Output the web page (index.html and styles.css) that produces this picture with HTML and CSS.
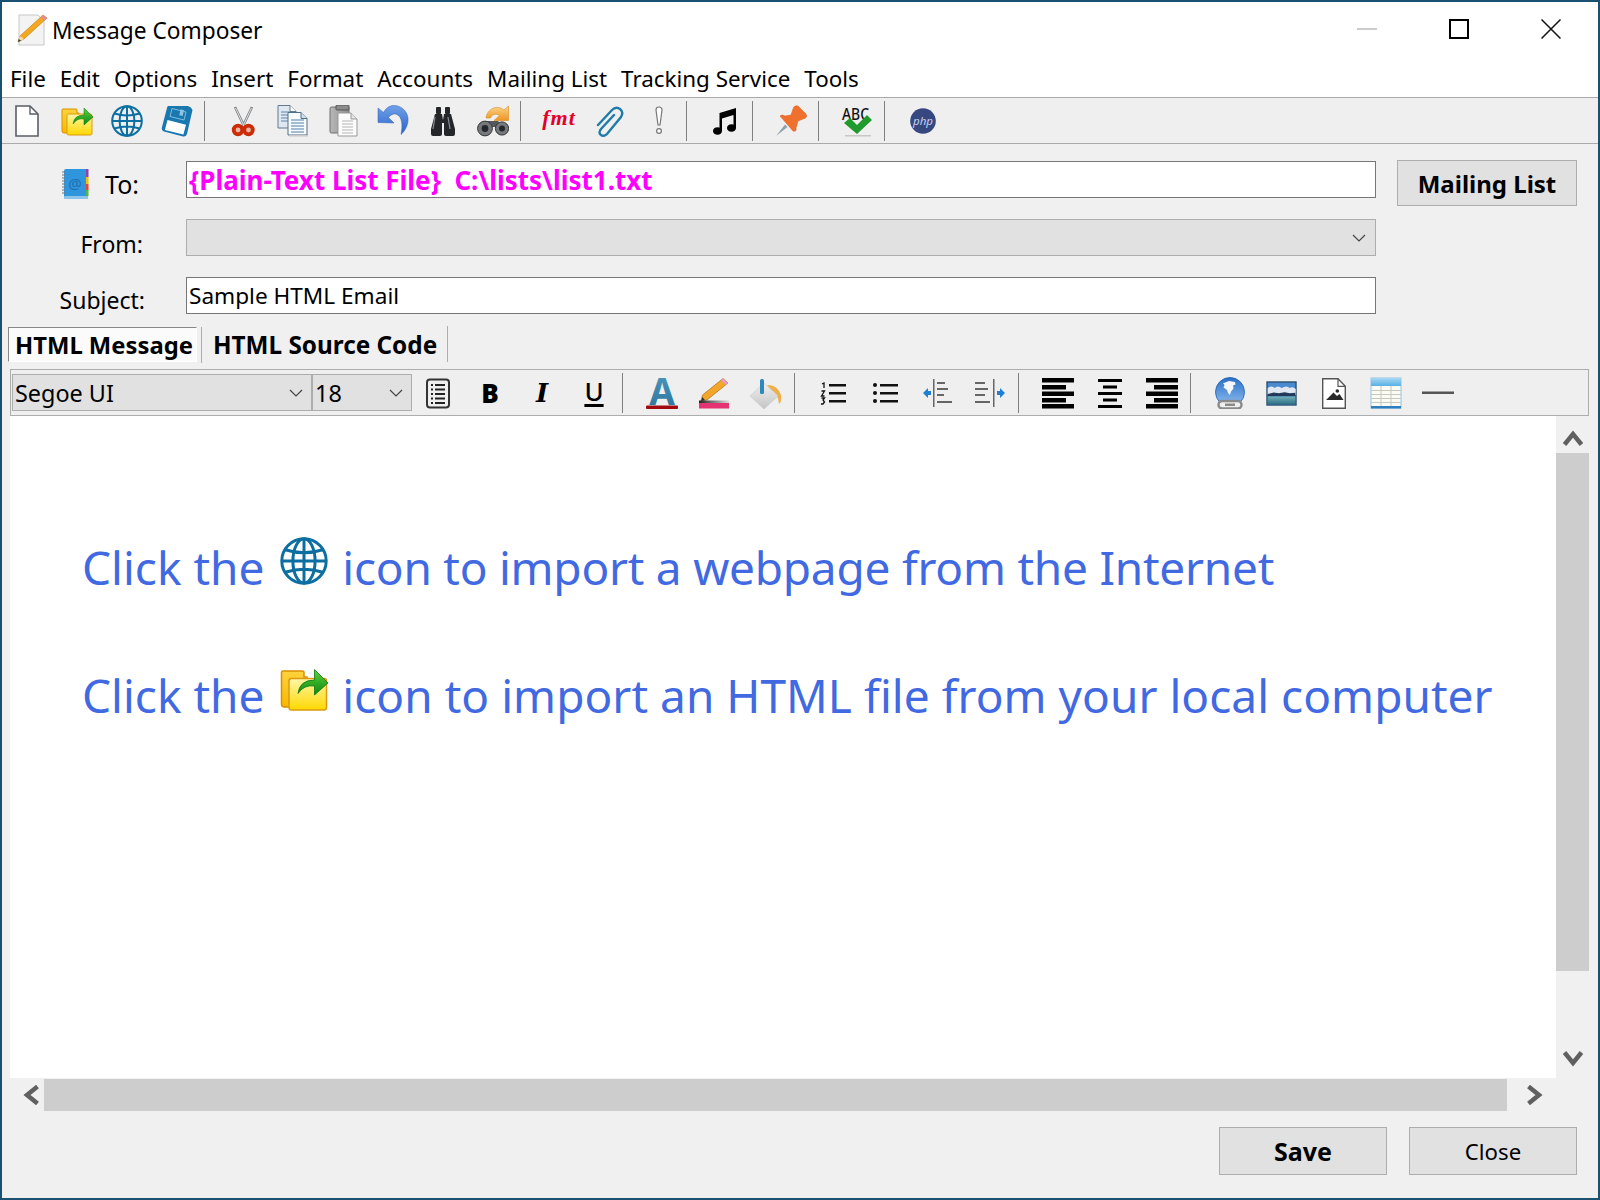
FILE: index.html
```html
<!DOCTYPE html>
<html lang="en">
<head>
<meta charset="utf-8">
<title>Message Composer</title>
<link rel="stylesheet" href="styles.css">
</head>
<body>
<svg class="sprite" xmlns="http://www.w3.org/2000/svg">
  <defs>
    <linearGradient id="gFolder" x1="0" y1="0" x2="0" y2="1"><stop offset="0" stop-color="#fff6a8"/><stop offset="1" stop-color="#ffd800"/></linearGradient>
    <linearGradient id="gBack" x1="0" y1="0" x2="0" y2="1"><stop offset="0" stop-color="#ffd23c"/><stop offset="1" stop-color="#f8b800"/></linearGradient>
    <linearGradient id="gArrow" x1="0" y1="0" x2="0" y2="1"><stop offset="0" stop-color="#5fd03a"/><stop offset="1" stop-color="#0a8a12"/></linearGradient>
    <linearGradient id="gUndo" x1="0" y1="0" x2="0" y2="1"><stop offset="0" stop-color="#6fa0e8"/><stop offset="1" stop-color="#2a64c8"/></linearGradient>
    <linearGradient id="gOrange" x1="0" y1="0" x2="0" y2="1"><stop offset="0" stop-color="#fbd58a"/><stop offset="1" stop-color="#ef9420"/></linearGradient>
    <linearGradient id="gA" x1="0" y1="0" x2="0" y2="1"><stop offset="0" stop-color="#4f9fc4"/><stop offset="1" stop-color="#2a6f98"/></linearGradient>
    <linearGradient id="gSea" x1="0" y1="0" x2="0" y2="1"><stop offset="0" stop-color="#6fb0b8"/><stop offset="1" stop-color="#2f6f88"/></linearGradient>
    <linearGradient id="gEarth" x1="0" y1="0" x2="0" y2="1"><stop offset="0" stop-color="#2a6fc8"/><stop offset="1" stop-color="#8fc0f0"/></linearGradient>
    <linearGradient id="gHead" x1="0" y1="0" x2="0" y2="1"><stop offset="0" stop-color="#a8d8f4"/><stop offset="1" stop-color="#58b0e4"/></linearGradient>
    <linearGradient id="gLine" x1="0" y1="0" x2="1" y2="0"><stop offset="0" stop-color="#222"/><stop offset="1" stop-color="#ddd"/></linearGradient>
    <linearGradient id="gBoard" x1="0" y1="0" x2="1" y2="0"><stop offset="0" stop-color="#b8b8b8"/><stop offset="1" stop-color="#8f8f8f"/></linearGradient>
    <linearGradient id="gDiamond" x1="0" y1="0" x2="0" y2="1"><stop offset="0" stop-color="#f0f0f0"/><stop offset="1" stop-color="#c4c4c4"/></linearGradient>
  </defs>
  <symbol id="i-new" viewBox="0 0 32 32">
    <path d="M5 1h14l8 8v22H5z" fill="#fff" stroke="#5a5f66" stroke-width="1.6"/>
    <path d="M19 1v8h8" fill="none" stroke="#5a5f66" stroke-width="1.4"/>
  </symbol>
  <symbol id="i-open" viewBox="0 0 32 32">
    <path d="M1 5q0-1 1-1h13q1 0 1 1v3h2v20H3q-2 0-2-2z" fill="url(#gBack)" stroke="#d89000"/>
    <rect x="6" y="9" width="25" height="21" rx="1.6" fill="url(#gFolder)" stroke="#dc9a10"/>
    <path d="M12 19q1-9 11-9V3l9 9-9 8v-6q-7-1-11 5z" fill="url(#gArrow)" stroke="#067010" stroke-width=".5"/>
  </symbol>
  <symbol id="i-globe" viewBox="0 0 32 32">
    <g fill="none" stroke="#0d6fa1" stroke-width="2">
      <circle cx="16" cy="16" r="14.8"/>
      <ellipse cx="16" cy="16" rx="7.4" ry="14.8"/>
      <path d="M16 1v30M1 16h30M3.500 8.500q12.500 4 25 0M3.500 23.500q12.500-4 25 0"/>
    </g>
  </symbol>
  <symbol id="i-disk" viewBox="0 0 32 32">
    <path d="M7 1h20q3.500 1 4.500 4L26 29q-1 3-4 2.500L3 26.500Q0 25 1 22L6 3q.2-1.500 1-2z" fill="#1a78b0"/>
    <path d="M11 3.500l14 3.500-2 8-14-3.500z" fill="#1a78b0" stroke="#7fbcdc"/>
    <rect x="19" y="4.500" width="3.500" height="6" fill="#8fc4e0" transform="rotate(14 20 7)"/>
    <path d="M6.500 15l18.500 4.700-2.600 9.800L3.900 25z" fill="#fff"/>
  </symbol>
  <symbol id="i-cut" viewBox="0 0 32 32">
    <path d="M8 2l9.500 20M25 2l-9.500 20" stroke="#85898d" stroke-width="2.600" fill="none"/>
    <path d="M8.500 3l8.500 18M24.500 3l-8.500 18" stroke="#f2f3f4" stroke-width=".8" fill="none"/>
    <circle cx="11" cy="25" r="4.300" fill="#e8b8a0" stroke="#cc2c08" stroke-width="3.800"/>
    <circle cx="21.500" cy="25" r="4.300" fill="#e8b8a0" stroke="#cc2c08" stroke-width="3.800"/>
  </symbol>
  <symbol id="i-copy" viewBox="0 0 32 32">
    <path d="M1 .5h12l6 6V23H1z" fill="#dfe8f0" stroke="#62798e"/>
    <path d="M4 7h10M4 10h10M4 13h10M4 16h10" stroke="#5f86a8"/>
    <path d="M13 .5v6h6" fill="#fff" stroke="#62798e"/>
    <path d="M11 7.500h13l6 6V30H11z" fill="#f8fbfe" stroke="#4f6f8a"/>
    <path d="M14 15h13M14 18h13M14 21h13M14 24h13M14 27h13" stroke="#4f7ea8"/>
    <path d="M24 7.500v6h6" fill="#cfdfee" stroke="#4f6f8a"/>
    <rect x="12" y="30" width="19" height="1.500" fill="#c8c8c8"/>
  </symbol>
  <symbol id="i-paste" viewBox="0 0 32 32">
    <rect x="3" y="2" width="19" height="26" rx="1.500" fill="url(#gBoard)" stroke="#6d6d6d"/>
    <rect x="9" y="0" width="13" height="5" rx="1" fill="#8c8c8c" stroke="#555"/>
    <path d="M11 8h13l6 6v17H11z" fill="#fcfcfc" stroke="#999"/>
    <path d="M15 16h11M15 19h11M15 22h11M15 25h11M15 28h11" stroke="#b4b4b4"/>
    <path d="M24 8v6h6" fill="#e4e4e4" stroke="#999"/>
  </symbol>
  <symbol id="i-undo" viewBox="0 0 32 32">
    <path d="M1 3v14.500L17 18l-5.500-5.500C14 9.500 17 8 20 9.500c5 2.500 6 10.500 4 20 4-3.500 7.500-9.500 7-16.500C30 5 23 0 16 .5 12 1 9 3 6.500 7.500z" fill="url(#gUndo)" stroke="#2a5fb8" stroke-width=".5"/>
  </symbol>
  <symbol id="i-find" viewBox="0 0 32 32">
    <g fill="#24262a">
      <rect x="9" y="2" width="5" height="7" rx="1"/>
      <rect x="18" y="2" width="5" height="7" rx="1"/>
      <path d="M8 9h7l1 6h0l1-6h7l4 15v5q0 2-2 2h-7q-2 0-2-2V18h-2v11q0 2-2 2H6q-2 0-2-2v-5z"/>
    </g>
    <path d="M8 12l-2 12M21 12l2 12" stroke="#8a8f94" stroke-width="1.200"/>
  </symbol>
  <symbol id="i-replace" viewBox="0 0 32 32">
    <path d="M9 13C10 4 20-1 27 5l4.500-4v14.500H17l5.500-5C19 8 15 9 13.500 13z" fill="url(#gOrange)" stroke="#d88a20" stroke-width=".6"/>
    <path d="M11 16h10l3 3 3 3H5z" fill="#55585c"/>
    <circle cx="8" cy="23.500" r="7.400" fill="#75797d" stroke="#333"/>
    <circle cx="8" cy="23.500" r="3.400" fill="#25272a"/>
    <circle cx="25" cy="23.500" r="6.600" fill="#75797d" stroke="#333"/>
    <circle cx="25" cy="23.500" r="3" fill="#25272a"/>
  </symbol>
  <symbol id="i-clip" viewBox="0 0 32 32">
    <path d="M21 9L8 23q-3 4 0 6 3 2 6-1L28 11q3-5-1-8-4-3-8 1L5 19" fill="none" stroke="#1f7ba8" stroke-width="2.400" stroke-linecap="round" transform="translate(0 1)"/>
  </symbol>
  <symbol id="i-alert" viewBox="0 0 32 32">
    <path d="M13 5q0-3 3-3t3 3l-2 15h-2z" fill="#fff" stroke="#777" stroke-width="1.200"/>
    <circle cx="16" cy="26" r="2.400" fill="#fff" stroke="#777" stroke-width="1.200"/>
  </symbol>
  <symbol id="i-music" viewBox="0 0 32 32">
    <path d="M10.500 8L27 3v20h-2.500V10l-11.500 3.500V26h-2.500z" fill="#000"/>
    <ellipse cx="8.500" cy="26" rx="4.500" ry="3.800" fill="#000"/>
    <ellipse cx="22.500" cy="23" rx="4.500" ry="3.800" fill="#000"/>
  </symbol>
  <symbol id="i-pin" viewBox="0 0 32 32">
    <path d="M1 31l9-11.500 2.500 2.500z" fill="#8fa3aa"/>
    <path d="M5 11q2-2 5 0l6-1 2-6q1-4 5-3l8 8q2 4-3 5l-5 2-2 7q1 4-3 3z" fill="#f0702e" stroke="#dc5c1c" stroke-width=".5" stroke-linejoin="round"/>
  </symbol>
  <symbol id="i-title" viewBox="0 0 32 32">
    <path d="M3 1h19l6 6v24H3z" fill="#f3f3f3" stroke="#c8c8c8"/>
    <path d="M27 1l4 3L8 25l-6 3 2-6z" fill="#f4a820" stroke="#b87a10" stroke-width=".6"/>
    <path d="M27 1l4 3-2.500 2.400-4-3z" fill="#e88a90"/>
    <path d="M4 22l-2 6 6-3z" fill="#f5dcb0"/>
    <path d="M2.800 25L2 28l3-1.300z" fill="#333"/>
  </symbol>
  <symbol id="i-notes" viewBox="0 0 32 32">
    <rect x="5" y="2.500" width="22" height="28" rx="3" fill="none" stroke="#333" stroke-width="2"/>
    <path d="M9 8h2M13 8h10M9 12.500h2M13 12.500h10M9 17h2M13 17h10M9 21.500h2M13 21.500h10M9 26h2M13 26h10" stroke="#222" stroke-width="2"/>
  </symbol>
  <symbol id="i-hilite" viewBox="0 0 32 32">
    <path d="M25 1.500l5 4.500L9 23l-6 1 1.500-6z" fill="#f4a62a" stroke="#a87018" stroke-width=".7"/>
    <path d="M25 1.500l5 4.500-2 2-5-4.500z" fill="#e89ac8"/>
    <path d="M4.500 20L3 24l4-.7z" fill="#333"/>
    <rect x="1" y="23.500" width="30" height="2.500" fill="url(#gLine)"/>
    <rect x="1" y="26" width="30" height="5.500" fill="#e43272"/>
  </symbol>
  <symbol id="i-bucket" viewBox="0 0 32 32">
    <path d="M17 8q10-1 14 10 1 7-2 9-1-11-8-14z" fill="#eeb14a"/>
    <path d="M14 6L0 19l14 13 14-13z" fill="url(#gDiamond)" stroke="#c8c8c8" stroke-width=".6"/>
    <rect x="10" y="2" width="4" height="15" rx="1.500" fill="#2e88bc"/>
  </symbol>
  <symbol id="i-ol" viewBox="0 0 32 32">
    <path d="M4 7l2-1v5M3.500 14h3l-3 5h3M3.500 21h3l-1.500 2 1.500 2-1.500 2h-2" fill="none" stroke="#111" stroke-width="1.300"/>
    <rect x="11" y="7" width="17" height="2.500" fill="#111"/>
    <rect x="11" y="15" width="17" height="2.500" fill="#111"/>
    <rect x="11" y="23" width="17" height="2.500" fill="#111"/>
  </symbol>
  <symbol id="i-ul" viewBox="0 0 32 32">
    <g fill="#111">
      <circle cx="5" cy="8" r="2"/><circle cx="5" cy="16" r="2"/><circle cx="5" cy="24" r="2"/>
      <rect x="10" y="7" width="18" height="2.500"/><rect x="10" y="15" width="18" height="2.500"/><rect x="10" y="23" width="18" height="2.500"/>
    </g>
  </symbol>
  <symbol id="i-outdent" viewBox="0 0 32 32">
    <path d="M1 16l5-5v3h3v4H6v3z" fill="#1f7fd0"/>
    <rect x="11" y="2" width="1.500" height="28" fill="#666"/>
    <g fill="#666"><rect x="15" y="5" width="8" height="2"/><rect x="15" y="11" width="11" height="2"/><rect x="15" y="17" width="7" height="2"/><rect x="15" y="24" width="15" height="2"/></g>
  </symbol>
  <symbol id="i-indent" viewBox="0 0 32 32">
    <g fill="#666"><rect x="1" y="5" width="10" height="2"/><rect x="1" y="11" width="13" height="2"/><rect x="1" y="17" width="10" height="2"/><rect x="1" y="24" width="15" height="2"/></g>
    <rect x="19" y="2" width="1.500" height="28" fill="#666"/>
    <path d="M31 16l-5-5v3h-3v4h3v3z" fill="#1f7fd0"/>
  </symbol>
  <symbol id="i-al" viewBox="0 0 32 32">
    <g fill="#000"><rect y="1" width="32" height="4.500"/><rect y="8" width="24" height="4.500"/><rect y="14.500" width="32" height="4.500"/><rect y="21" width="24" height="4.500"/><rect y="27" width="32" height="4.500"/></g>
  </symbol>
  <symbol id="i-ac" viewBox="0 0 32 32">
    <g fill="#000"><rect x="4" y="2" width="24" height="3"/><rect x="9" y="8.500" width="14" height="3"/><rect x="4" y="15" width="24" height="3"/><rect x="9" y="21.500" width="14" height="3"/><rect x="4" y="28" width="24" height="3"/></g>
  </symbol>
  <symbol id="i-ar" viewBox="0 0 32 32">
    <g fill="#000"><rect y="1" width="32" height="4.500"/><rect x="8" y="8" width="24" height="4.500"/><rect y="14.500" width="32" height="4.500"/><rect x="8" y="21" width="24" height="4.500"/><rect y="27" width="32" height="4.500"/></g>
  </symbol>
  <symbol id="i-link" viewBox="0 0 32 32">
    <circle cx="16" cy="15" r="14.500" fill="url(#gEarth)" stroke="#1c5fa8" stroke-width=".8"/>
    <path d="M10 6l5-2 6 1 .5 2.500-2.500 1 .5 3-2.500 3-1 3.500-2-2-1-3-3.500-2.500 1-2.500-1.500-2z" fill="#f4f7fb"/>
    <rect x="4.500" y="24" width="23" height="7.500" rx="3.700" fill="#efefef" stroke="#8a8a8a" stroke-width="2.400"/>
    <rect x="11" y="26.500" width="10" height="2.500" fill="#8a8a8a"/>
  </symbol>
  <symbol id="i-image" viewBox="0 0 32 32">
    <rect x="1" y="5" width="29" height="23" fill="#4a8ad0" stroke="#2a5070" stroke-width="1.400"/>
    <path d="M1.700 11q4-3 7 0 3-3 7 0 5-3 8 0 3-2 6 1v6H1.700z" fill="#dfe8f2"/>
    <path d="M1.700 17l6-1.500 5 .8 6-1 5 1 5.600-.5v3.500H1.700z" fill="#23385a"/>
    <rect x="1.700" y="19.500" width="27.600" height="7.800" fill="url(#gSea)"/>
  </symbol>
  <symbol id="i-imgfile" viewBox="0 0 32 32">
    <path d="M4.700 1.700H20l7.300 7.600v22H4.700z" fill="#fff" stroke="#555" stroke-width="1.400"/>
    <path d="M20 1.700v7.600h7.300" fill="none" stroke="#555" stroke-width="1.200"/>
    <path d="M8 23l7.500-7.500 3.500 3.500 2.500-2 4 6z" fill="#2a2a2a"/>
    <circle cx="19.300" cy="14" r="1.800" fill="#2a2a2a"/>
  </symbol>
  <symbol id="i-table" viewBox="0 0 32 32">
    <rect x="1" y="1" width="30" height="30" fill="#fbfbf6" stroke="#8fc4e6"/>
    <rect x="1" y="1" width="30" height="8" fill="url(#gHead)"/>
    <rect x="1" y="29" width="30" height="2.500" fill="#2f7fc0"/>
    <path d="M1 13.500h30M1 17.500h30M1 21.500h30M1 25.500h30M11 9v20M21 9v20" stroke="#c8c8c0" stroke-width="1"/>
  </symbol>
  <symbol id="i-rule" viewBox="0 0 32 32">
    <rect y="14.500" width="32" height="2.500" fill="#555"/>
  </symbol>
</svg>

<div class="window">
  <header class="titlebar">
    <svg class="icon"><use href="#i-title"/></svg>
    <span class="title">Message Composer</span>
    <div class="winbtns">
      <svg class="winbtn" viewBox="0 0 20 20"><path d="M0 10h20" stroke="#ccc" stroke-width="2"/></svg>
      <svg class="winbtn" viewBox="0 0 20 20"><rect x="1" y="1" width="18" height="18" fill="none" stroke="#000" stroke-width="2"/></svg>
      <svg class="winbtn" viewBox="0 0 20 20"><path d="M.5.500l19 19M19.500.500l-19 19" stroke="#111" stroke-width="1.500"/></svg>
    </div>
  </header>
  <nav class="menubar">
    <span>File</span><span>Edit</span><span>Options</span><span>Insert</span><span>Format</span><span>Accounts</span><span>Mailing List</span><span>Tracking Service</span><span>Tools</span>
  </nav>
  <div class="toolbar">
    <span class="slot"><svg class="icon"><use href="#i-new"/></svg></span>
    <span class="slot"><svg class="icon"><use href="#i-open"/></svg></span>
    <span class="slot"><svg class="icon"><use href="#i-globe"/></svg></span>
    <span class="slot"><svg class="icon"><use href="#i-disk"/></svg></span>
    <span class="sep"></span>
    <span class="slot"><svg class="icon"><use href="#i-cut"/></svg></span>
    <span class="slot"><svg class="icon"><use href="#i-copy"/></svg></span>
    <span class="slot"><svg class="icon"><use href="#i-paste"/></svg></span>
    <span class="slot"><svg class="icon"><use href="#i-undo"/></svg></span>
    <span class="slot"><svg class="icon"><use href="#i-find"/></svg></span>
    <span class="slot"><svg class="icon"><use href="#i-replace"/></svg></span>
    <span class="sep"></span>
    <span class="slot fmt">fmt</span>
    <span class="slot"><svg class="icon"><use href="#i-clip"/></svg></span>
    <span class="slot"><svg class="icon"><use href="#i-alert"/></svg></span>
    <span class="sep"></span>
    <span class="slot"><svg class="icon"><use href="#i-music"/></svg></span>
    <span class="sep"></span>
    <span class="slot"><svg class="icon"><use href="#i-pin"/></svg></span>
    <span class="sep"></span>
    <span class="slot">
      <svg class="icon" viewBox="0 0 32 32">
        <text x="1" y="15" textLength="27" lengthAdjust="spacingAndGlyphs" class="svg-abc">ABC</text>
        <path d="M3 18l6-5 7 7 10-10 5 5-15 14z" fill="#1f9a2c"/>
        <rect x="4" y="30" width="26" height="1.500" fill="#c8c8c8"/>
      </svg>
    </span>
    <span class="sep"></span>
    <span class="slot">
      <svg class="icon" viewBox="0 0 32 32">
        <circle cx="16" cy="16" r="12.800" fill="#37477f"/>
        <text x="16" y="20" text-anchor="middle" class="svg-php">php</text>
      </svg>
    </span>
  </div>

  <section class="form">
    <label class="lbl lbl-to">
      <svg class="icon book" viewBox="0 0 32 32">
        <rect x="4" y="1" width="24" height="30" rx="2" fill="#2f95dc"/>
        <rect x="4" y="28" width="24" height="3" rx="1" fill="#8cc4ea"/>
        <rect x="26" y="1" width="2.500" height="8" fill="#9040b0"/>
        <rect x="26" y="9" width="2.500" height="7" fill="#f5c000"/>
        <rect x="26" y="16" width="2.500" height="6" fill="#e8452c"/>
        <rect x="26" y="22" width="2.500" height="6" fill="#4fb848"/>
        <path d="M2 4h3M2 7h3M2 10h3M2 13h3M2 16h3M2 19h3M2 22h3M2 25h3" stroke="#777" stroke-width="1"/>
        <text x="15" y="21" text-anchor="middle" class="svg-at">@</text>
      </svg>To:</label>
    <div class="field to-field">{Plain-Text List File}  C:\lists\list1.txt</div>
    <button class="btn btn-list">Mailing List</button>
    <label class="lbl lbl-from">From:</label>
    <div class="field field-off"><svg class="chev" viewBox="0 0 14 8"><path d="M1 1l6 6 6-6" fill="none" stroke="#444" stroke-width="1.200"/></svg></div>
    <span></span>
    <label class="lbl lbl-subject">Subject:</label>
    <div class="field">Sample HTML Email</div>
  </section>

  <div class="tabs">
    <span class="tab tab-on">HTML Message</span>
    <span class="tab tab-src">HTML Source Code</span>
  </div>

  <div class="fmtbar">
    <div class="combo combo-font">Segoe UI<svg class="chev" viewBox="0 0 14 8"><path d="M1 1l6 6 6-6" fill="none" stroke="#444" stroke-width="1.200"/></svg></div>
    <div class="combo combo-size">18<svg class="chev" viewBox="0 0 14 8"><path d="M1 1l6 6 6-6" fill="none" stroke="#444" stroke-width="1.200"/></svg></div>
    <span class="fslot"><svg class="icon"><use href="#i-notes"/></svg></span>
    <span class="fslot fx fx-b">B</span>
    <span class="fslot fx fx-i">I</span>
    <span class="fslot fx fx-u">U</span>
    <span class="sep"></span>
    <span class="fslot">
      <svg class="icon" viewBox="0 0 32 32">
        <text x="16" y="27.500" text-anchor="middle" class="svg-a">A</text>
        <rect x="0" y="28.500" width="32" height="3.500" rx="1" fill="#a00a10"/>
      </svg>
    </span>
    <span class="fslot"><svg class="icon"><use href="#i-hilite"/></svg></span>
    <span class="fslot"><svg class="icon"><use href="#i-bucket"/></svg></span>
    <span class="sep"></span>
    <span class="fslot"><svg class="icon"><use href="#i-ol"/></svg></span>
    <span class="fslot"><svg class="icon"><use href="#i-ul"/></svg></span>
    <span class="fslot"><svg class="icon"><use href="#i-outdent"/></svg></span>
    <span class="fslot"><svg class="icon"><use href="#i-indent"/></svg></span>
    <span class="sep"></span>
    <span class="fslot"><svg class="icon"><use href="#i-al"/></svg></span>
    <span class="fslot"><svg class="icon"><use href="#i-ac"/></svg></span>
    <span class="fslot"><svg class="icon"><use href="#i-ar"/></svg></span>
    <span class="sep"></span>
    <span class="fslot"><svg class="icon"><use href="#i-link"/></svg></span>
    <span class="fslot"><svg class="icon"><use href="#i-image"/></svg></span>
    <span class="fslot"><svg class="icon"><use href="#i-imgfile"/></svg></span>
    <span class="fslot"><svg class="icon"><use href="#i-table"/></svg></span>
    <span class="fslot"><svg class="icon"><use href="#i-rule"/></svg></span>
  </div>

  <div class="workarea">
    <main class="editor">
      <p>Click the <svg class="inline"><use href="#i-globe"/></svg> <span class="tail-a">icon to import a webpage from the Internet</span></p>
      <p>Click the <svg class="inline"><use href="#i-open"/></svg> <span class="tail-b">icon to import an HTML file from your local computer</span></p>
    </main>
    <div class="vscroll">
      <svg class="arrow-v" viewBox="0 0 20 16"><path d="M1.500 14.500L10 4l8.500 10.500" fill="none" stroke="#606060" stroke-width="4.500"/></svg>
      <div class="vthumb"></div>
      <svg class="arrow-v" viewBox="0 0 20 16"><path d="M1.500 1.500L10 12l8.500-10.500" fill="none" stroke="#606060" stroke-width="4.500"/></svg>
    </div>
  </div>
  <div class="hscroll">
    <svg class="arrow-h" viewBox="0 0 16 20"><path d="M14.500 1.500L4 10l10.500 8.500" fill="none" stroke="#606060" stroke-width="4.500"/></svg>
    <div class="hthumb"></div>
    <svg class="arrow-h" viewBox="0 0 16 20"><path d="M1.500 1.500L12 10 1.500 18.500" fill="none" stroke="#606060" stroke-width="4.500"/></svg>
  </div>
  <footer class="footer">
    <button class="btn btn-foot btn-save">Save</button>
    <button class="btn btn-foot btn-close">Close</button>
  </footer>
</div>
</body>
</html>
```

FILE: styles.css
```css
* { box-sizing: border-box; }
html, body { margin: 0; padding: 0; }
body { font-family: "Noto Sans", sans-serif; font-size: 22.6px; color: #000; background: #f0f0f0; }
.sprite { position: absolute; width: 0; height: 0; overflow: hidden; }
.svg-abc { font: 500 17px "Noto Sans", sans-serif; fill: #111; }
.svg-php { font: italic 11.5px "Noto Sans", sans-serif; fill: #c6d0f0; }
.svg-at { font: 15px "Noto Sans", sans-serif; fill: #1d70b0; }
.svg-a { font: bold 37px "Noto Sans", sans-serif; fill: url(#gA); }

.window { width: 1600px; height: 1200px; border: 2px solid #1b5170; background: #f0f0f0; display: flex; flex-direction: column; overflow: hidden; }
.icon { width: 32px; height: 32px; display: block; flex: none; }

.titlebar { height: 50px; background: #fff; display: flex; align-items: center; padding: 6px 0 0 14px; }
.title { margin-left: 4px; font-size: 22.7px; }
.winbtns { margin-left: auto; display: flex; gap: 72px; padding-right: 37px; margin-top: -2px; }
.winbtn { width: 20px; height: 20px; display: block; }

.menubar { height: 45px; background: #fff; display: flex; align-items: center; gap: 14px; padding: 8px 0 0 8px; font-size: 22.4px; }

.toolbar { height: 47px; background: #efefef; border-top: 1px solid #aaa; border-bottom: 1px solid #aaa; display: flex; align-items: center; }
.slot { width: 50px; display: flex; justify-content: center; align-items: center; flex: none; }
.sep { width: 1px; height: 40px; background: #808080; margin: 0 13px 0 2px; flex: none; }
.fmt { font: italic bold 22px "Liberation Serif", serif; color: #e3002a; letter-spacing: 1px; padding-bottom: 5px; }

.form { display: grid; grid-template-columns: 184px 1190px 201px; grid-auto-rows: 37px; row-gap: 21px; padding-top: 17px; }
.lbl { display: flex; align-items: center; justify-content: flex-end; }
.lbl-to { padding-right: 47px; padding-top: 8px; font-size: 25px; }
.lbl-from { padding-right: 43px; padding-top: 12px; font-size: 23px; }
.lbl-subject { padding-right: 41px; padding-top: 8px; font-size: 23px; }
.book { margin: 0 13px 0 0; }
.field { border: 1px solid #777; background: #fff; display: flex; align-items: center; padding-left: 2px; white-space: pre; }
.to-field { color: #ff00ff; font-weight: 700; font-size: 26px; }
.field-off { background: #e1e1e1; border-color: #adadad; justify-content: flex-end; padding-right: 9px; }
.chev { width: 14px; height: 8px; display: block; }

.btn { font-family: "Noto Sans", sans-serif; font-size: 24px; background: #e1e1e1; border: 1px solid #adadad; color: #000; padding: 0; }
.btn-list { font-weight: 700; width: 180px; height: 46px; margin: -1px 0 0 21px; }

.tabs { height: 36px; margin-top: 12px; padding-left: 6px; display: flex; font-weight: 700; font-size: 24px; }
.tab { display: flex; align-items: center; height: 36px; padding: 0 10px 0 11px; border-right: 1px solid #adadad; }
.tab-src { font-size: 24.3px; }
.tab-on { width: 189px; height: 35px; padding: 0 0 0 6px; margin-top: 1px; border: 1px solid #fff; border-top-color: #888; border-left-color: #888; background: #fbfbfb; margin-right: 5px; position: relative; font-size: 23.8px; }
.tab-on::after { content: ""; position: absolute; right: -6px; top: -1px; width: 1px; height: 36px; background: #adadad; }

.fmtbar { height: 47px; margin: 7px 9px 0 8px; border: 1px solid #adadad; background: #efefef; display: flex; align-items: center; padding-left: 1px; }
.combo { height: 37px; background: #e1e1e1; border: 1px solid #adadad; display: flex; align-items: center; justify-content: space-between; padding: 0 8px 0 2px; flex: none; font-size: 23.4px; }
.combo-font { width: 300px; }
.combo-size { width: 100px; }
.fslot { width: 52px; display: flex; justify-content: center; align-items: center; flex: none; }
.fx { font: 900 26px "Noto Sans", sans-serif; height: 32px; }
.fx-i { font-style: italic; font-family: "DejaVu Serif", serif; }
.fx-u { font-weight: 500; text-decoration: underline; text-decoration-thickness: 2.5px; text-underline-offset: 3px; padding-bottom: 4px; }
.fmtbar .sep { margin: 0 13px 0 2px; }

.workarea { height: 662px; display: flex; margin-left: 8px; margin-right: 9px; }
.editor { width: 1546px; background: #fff; padding-top: 87px; padding-left: 72px; font-size: 46px; line-height: 128px; color: #4169e1; white-space: nowrap; overflow: hidden; }
.editor p { margin: 0; height: 128px; }
.inline { width: 48px; height: 48px; vertical-align: baseline; margin: 0 2px 0 4px; }
.tail-a { letter-spacing: -.24px; }
.tail-b { letter-spacing: .04px; }
.vscroll { flex: 1; display: flex; flex-direction: column; align-items: center; }
.vthumb { width: 100%; height: 518px; background: #cdcdcd; margin: 7px 0 0; flex: none; }
.arrow-v { width: 20px; height: 16px; margin-top: 14px; flex: none; display: block; }
.vthumb + .arrow-v { margin-top: 80px; }

.hscroll { height: 32px; margin: 1px 38px 0 8px; display: flex; align-items: center; }
.arrow-h { width: 16px; height: 20px; flex: none; display: block; margin: 0 0 0 20px; }
.hthumb { width: 1463px; height: 32px; background: #cdcdcd; }
.hscroll .arrow-h:first-child { margin: 0 5px 0 13px; }

.footer { display: flex; justify-content: flex-end; gap: 22px; padding: 16px 21px 0 0; }
.btn-foot { width: 168px; height: 48px; }
.btn-save { font-weight: 700; font-size: 25px; }
.btn-close { font-size: 22.2px; }
```
